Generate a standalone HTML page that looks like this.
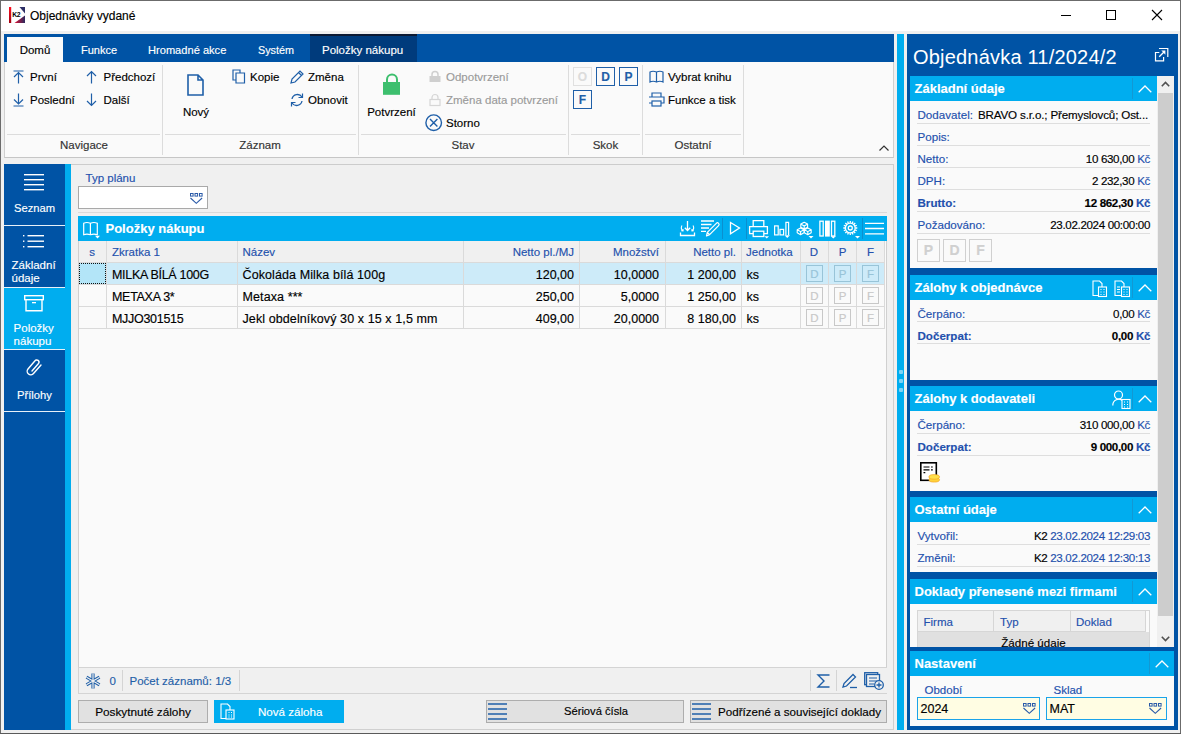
<!DOCTYPE html><html><head><meta charset="utf-8"><style>
html,body{margin:0;padding:0;}
body{width:1181px;height:734px;position:relative;overflow:hidden;background:#f0f0f0;font-family:"Liberation Sans", sans-serif;}
svg{overflow:visible}
div{-webkit-text-stroke:0.15px currentColor}
</style></head><body>
<div style="position:absolute;left:0px;top:0px;width:1181px;height:734px;background:#f0f0f0"></div>
<div style="position:absolute;left:0px;top:0px;width:1181px;height:31px;background:#ffffff"></div>
<div style="position:absolute;left:0px;top:0px;width:1181px;height:1px;background:#6b6b6b"></div>
<div style="position:absolute;left:0px;top:0px;width:1px;height:734px;background:#6b6b6b"></div>
<div style="position:absolute;left:1180px;top:0px;width:1px;height:734px;background:#6b6b6b"></div>
<div style="position:absolute;left:0px;top:733px;width:1181px;height:1px;background:#5a5a5a"></div>
<svg style="position:absolute;left:9px;top:7px;" width="16" height="16" viewBox="0 0 16 16"><defs><linearGradient id="k2r" x1="0" y1="0" x2="0" y2="1"><stop offset="0" stop-color="#ff1020"/><stop offset="1" stop-color="#a00010"/></linearGradient><linearGradient id="k2b" x1="0" y1="0" x2="1" y2="0"><stop offset="0" stop-color="#e01030"/><stop offset="1" stop-color="#2a2a60"/></linearGradient></defs><rect x="0" y="0" width="16" height="16" fill="#fff"/><rect x="0" y="0" width="2.2" height="16" fill="url(#k2r)"/><path d="M10.5 0 H16 V6.5 Z" fill="#2d2f66"/><path d="M5.5 16 H16 V8.5 Z" fill="url(#k2b)"/><text x="3.2" y="10.3" font-size="6.8" font-weight="700" fill="#000" font-family="Liberation Sans" letter-spacing="-0.3">K2</text></svg>
<div style="position:absolute;left:30px;top:8.5px;line-height:14px;font-size:12px;color:#000;font-weight:400;white-space:nowrap;">Objednávky vydané</div>
<div style="position:absolute;left:1061px;top:15px;width:10px;height:1px;background:#000"></div>
<div style="position:absolute;left:1106px;top:10px;width:10px;height:10px;border:1px solid #000;box-sizing:border-box"></div>
<svg style="position:absolute;left:1152px;top:10px;" width="10" height="10" viewBox="0 0 10 10"><path d="M0 0 L10 10 M10 0 L0 10" stroke="#000" stroke-width="1.1"/></svg>
<div style="position:absolute;left:4px;top:34px;width:890px;height:28px;background:#0053a5"></div>
<div style="position:absolute;left:7px;top:37px;width:56px;height:25px;background:#fafafa"></div>
<div style="position:absolute;left:7.0px;width:56px;text-align:center;top:42.5px;line-height:14px;font-size:11.5px;color:#000;font-weight:400;white-space:nowrap;">Domů</div>
<div style="position:absolute;left:81px;top:43.8px;line-height:13px;font-size:11px;color:#fff;font-weight:400;white-space:nowrap;">Funkce</div>
<div style="position:absolute;left:148px;top:43.8px;line-height:13px;font-size:11.1px;color:#fff;font-weight:400;white-space:nowrap;">Hromadné akce</div>
<div style="position:absolute;left:258px;top:43.8px;line-height:13px;font-size:10.8px;color:#fff;font-weight:400;white-space:nowrap;">Systém</div>
<div style="position:absolute;left:310px;top:34px;width:107px;height:28px;background:#003b7c"></div>
<div style="position:absolute;left:310px;top:34px;width:107px;height:2px;background:#0c1a33"></div>
<div style="position:absolute;left:322px;top:42.5px;line-height:14px;font-size:11.5px;color:#fff;font-weight:400;white-space:nowrap;">Položky nákupu</div>
<div style="position:absolute;left:4px;top:62px;width:890px;height:96px;background:#fafafa;border:1px solid #d0d0d0;border-bottom-color:#c6c6c6;border-top:none;box-sizing:border-box"></div>
<div style="position:absolute;left:162px;top:65px;width:1px;height:90px;background:#dcdcdc"></div>
<div style="position:absolute;left:358px;top:65px;width:1px;height:90px;background:#dcdcdc"></div>
<div style="position:absolute;left:568px;top:65px;width:1px;height:90px;background:#dcdcdc"></div>
<div style="position:absolute;left:642px;top:65px;width:1px;height:90px;background:#dcdcdc"></div>
<div style="position:absolute;left:743px;top:65px;width:1px;height:90px;background:#dcdcdc"></div>
<div style="position:absolute;left:7px;top:134px;width:153px;height:1px;background:#dcdcdc"></div>
<div style="position:absolute;left:165px;top:134px;width:191px;height:1px;background:#dcdcdc"></div>
<div style="position:absolute;left:361px;top:134px;width:205px;height:1px;background:#dcdcdc"></div>
<div style="position:absolute;left:571px;top:134px;width:69px;height:1px;background:#dcdcdc"></div>
<div style="position:absolute;left:645px;top:134px;width:96px;height:1px;background:#dcdcdc"></div>
<div style="position:absolute;left:34.0px;width:100px;text-align:center;top:137.5px;line-height:14px;font-size:11.5px;color:#333;font-weight:400;white-space:nowrap;">Navigace</div>
<div style="position:absolute;left:210.0px;width:100px;text-align:center;top:137.5px;line-height:14px;font-size:11.5px;color:#333;font-weight:400;white-space:nowrap;">Záznam</div>
<div style="position:absolute;left:413.0px;width:100px;text-align:center;top:137.5px;line-height:14px;font-size:11.5px;color:#333;font-weight:400;white-space:nowrap;">Stav</div>
<div style="position:absolute;left:575.5px;width:60px;text-align:center;top:137.5px;line-height:14px;font-size:11.5px;color:#333;font-weight:400;white-space:nowrap;">Skok</div>
<div style="position:absolute;left:653.0px;width:80px;text-align:center;top:137.5px;line-height:14px;font-size:11.5px;color:#333;font-weight:400;white-space:nowrap;">Ostatní</div>
<svg style="position:absolute;left:13px;top:70px;" width="11" height="14" viewBox="0 0 11 14"><path d="M0.5 1 H10.5 M5.5 2.5 V13.5 M1 7 L5.5 2.5 L10 7" stroke="#1f5fa8" stroke-width="1.2" fill="none"/></svg>
<div style="position:absolute;left:30px;top:70.0px;line-height:14px;font-size:11.5px;color:#000;font-weight:400;white-space:nowrap;">První</div>
<svg style="position:absolute;left:13px;top:93px;" width="11" height="14" viewBox="0 0 11 14"><path d="M0.5 13 H10.5 M5.5 0.5 V11 M1 6.5 L5.5 11 L10 6.5" stroke="#1f5fa8" stroke-width="1.2" fill="none"/></svg>
<div style="position:absolute;left:30px;top:93.0px;line-height:14px;font-size:11.5px;color:#000;font-weight:400;white-space:nowrap;">Poslední</div>
<svg style="position:absolute;left:86px;top:70px;" width="11" height="14" viewBox="0 0 11 14"><path d="M5.5 1.5 V13.5 M1 6 L5.5 1.5 L10 6" stroke="#1f5fa8" stroke-width="1.2" fill="none"/></svg>
<div style="position:absolute;left:103.5px;top:70.0px;line-height:14px;font-size:11.5px;color:#000;font-weight:400;white-space:nowrap;">Předchozí</div>
<svg style="position:absolute;left:86px;top:93px;" width="11" height="14" viewBox="0 0 11 14"><path d="M5.5 0.5 V12.5 M1 8 L5.5 12.5 L10 8" stroke="#1f5fa8" stroke-width="1.2" fill="none"/></svg>
<div style="position:absolute;left:103.5px;top:93.0px;line-height:14px;font-size:11.5px;color:#000;font-weight:400;white-space:nowrap;">Další</div>
<svg style="position:absolute;left:187px;top:74px;" width="17" height="22" viewBox="0 0 17 22"><path d="M1 1 H11 L16 6 V21 H1 Z M11 1 V6 H16" stroke="#1f5fa8" stroke-width="1.6" fill="none" stroke-linejoin="miter"/></svg>
<div style="position:absolute;left:176.0px;width:40px;text-align:center;top:105.0px;line-height:14px;font-size:11.5px;color:#000;font-weight:400;white-space:nowrap;">Nový</div>
<svg style="position:absolute;left:232px;top:69px;" width="14" height="15" viewBox="0 0 14 15"><path d="M1 1 H8 V11 H1 Z" stroke="#1f5fa8" stroke-width="1.2" fill="none"/><path d="M4 4 H12.5 V14 H4 Z" stroke="#1f5fa8" stroke-width="1.2" fill="#fafafa"/></svg>
<div style="position:absolute;left:250px;top:70.0px;line-height:14px;font-size:11.5px;color:#000;font-weight:400;white-space:nowrap;">Kopie</div>
<svg style="position:absolute;left:290px;top:70px;" width="14" height="14" viewBox="0 0 14 14"><path d="M1 13 L2 9 L10 1 L13 4 L5 12 Z M8.5 2.5 L11.5 5.5" stroke="#1f5fa8" stroke-width="1.2" fill="none"/></svg>
<div style="position:absolute;left:308px;top:70.0px;line-height:14px;font-size:11.5px;color:#000;font-weight:400;white-space:nowrap;">Změna</div>
<svg style="position:absolute;left:290px;top:93px;" width="14" height="14" viewBox="0 0 14 14"><path d="M2 6 A5.5 5.5 0 0 1 12 4 M12 8 A5.5 5.5 0 0 1 2 10" stroke="#1f5fa8" stroke-width="1.3" fill="none"/><path d="M12.5 0.5 V4.5 H8.5 M1.5 13.5 V9.5 H5.5" stroke="#1f5fa8" stroke-width="1.2" fill="none"/></svg>
<div style="position:absolute;left:308px;top:93.0px;line-height:14px;font-size:11.5px;color:#000;font-weight:400;white-space:nowrap;">Obnovit</div>
<svg style="position:absolute;left:383px;top:74px;" width="18" height="21" viewBox="0 0 18 21"><path d="M4 8 V5.5 A5 5 0 0 1 14 5.5 V8" stroke="#3dbf6e" stroke-width="2" fill="none"/><rect x="0" y="8" width="17" height="12.8" fill="#3dbf6e"/></svg>
<div style="position:absolute;left:356.5px;width:70px;text-align:center;top:105.0px;line-height:14px;font-size:11.5px;color:#000;font-weight:400;white-space:nowrap;">Potvrzení</div>
<svg style="position:absolute;left:429px;top:71px;" width="12" height="11" viewBox="0 0 12 11"><path d="M3 5 V3.5 A3 3 0 0 1 9 3.5 V5" stroke="#cfcfcf" stroke-width="1.5" fill="none"/><rect x="0.5" y="5" width="11" height="6" fill="#cfcfcf"/></svg>
<div style="position:absolute;left:446px;top:70.0px;line-height:14px;font-size:11.5px;color:#9a9a9a;font-weight:400;white-space:nowrap;">Odpotvrzení</div>
<svg style="position:absolute;left:429px;top:93.5px;" width="12" height="12" viewBox="0 0 12 12"><path d="M3 5.5 V3.5 A3 3 0 0 1 9 3.5 V5.5" stroke="#d6d6d6" stroke-width="1.2" fill="none"/><rect x="1" y="5.5" width="10" height="6" stroke="#d6d6d6" stroke-width="1.2" fill="none"/></svg>
<div style="position:absolute;left:446px;top:93.0px;line-height:14px;font-size:11.5px;color:#9a9a9a;font-weight:400;white-space:nowrap;">Změna data potvrzení</div>
<svg style="position:absolute;left:425px;top:114px;" width="18" height="18" viewBox="0 0 18 18"><circle cx="8.7" cy="8.7" r="7.8" stroke="#1f5fa8" stroke-width="1.4" fill="none"/><path d="M5 5 L12.4 12.4 M12.4 5 L5 12.4" stroke="#1f5fa8" stroke-width="1.4"/></svg>
<div style="position:absolute;left:446px;top:116.0px;line-height:14px;font-size:11.5px;color:#000;font-weight:400;white-space:nowrap;">Storno</div>
<div style="position:absolute;left:573px;top:67px;width:19px;height:19px;border:1px solid #e0e0e0;box-sizing:border-box"></div>
<div style="position:absolute;left:573.0px;width:19px;text-align:center;top:70.0px;line-height:14px;font-size:12px;color:#dcdcdc;font-weight:700;white-space:nowrap;">O</div>
<div style="position:absolute;left:596px;top:67px;width:19px;height:19px;border:1.5px solid #1f5fa8;box-sizing:border-box"></div>
<div style="position:absolute;left:596.0px;width:19px;text-align:center;top:70.0px;line-height:14px;font-size:12px;color:#1f5fa8;font-weight:700;white-space:nowrap;">D</div>
<div style="position:absolute;left:619px;top:67px;width:19px;height:19px;border:1.5px solid #1f5fa8;box-sizing:border-box"></div>
<div style="position:absolute;left:619.0px;width:19px;text-align:center;top:70.0px;line-height:14px;font-size:12px;color:#1f5fa8;font-weight:700;white-space:nowrap;">P</div>
<div style="position:absolute;left:573px;top:90px;width:19px;height:19px;border:1.5px solid #1f5fa8;box-sizing:border-box"></div>
<div style="position:absolute;left:573.0px;width:19px;text-align:center;top:93.0px;line-height:14px;font-size:12px;color:#1f5fa8;font-weight:700;white-space:nowrap;">F</div>
<svg style="position:absolute;left:649px;top:70px;" width="15" height="13" viewBox="0 0 15 13"><path d="M1 2 Q4 0.5 7.5 2 Q11 0.5 14 2 V12 Q11 10.5 7.5 12 Q4 10.5 1 12 Z M7.5 2 V12" stroke="#1f5fa8" stroke-width="1.2" fill="none"/></svg>
<div style="position:absolute;left:668px;top:70.0px;line-height:14px;font-size:11.5px;color:#000;font-weight:400;white-space:nowrap;">Vybrat knihu</div>
<svg style="position:absolute;left:648px;top:92px;" width="17" height="15" viewBox="0 0 17 15"><path d="M4 5 V1 H13 V5 M1 5 H16 V11 H13 M4 11 H1 Z" stroke="#1f5fa8" stroke-width="1.2" fill="none"/><rect x="4" y="9" width="9" height="5" stroke="#1f5fa8" stroke-width="1.2" fill="#fafafa"/></svg>
<div style="position:absolute;left:668px;top:92.5px;line-height:14px;font-size:11.5px;color:#000;font-weight:400;white-space:nowrap;">Funkce a tisk</div>
<svg style="position:absolute;left:879px;top:145px;" width="10" height="6" viewBox="0 0 10 6"><path d="M0.5 5.5 L5 1 L9.5 5.5" stroke="#333" stroke-width="1.2" fill="none"/></svg>
<div style="position:absolute;left:4px;top:164px;width:61px;height:566px;background:#0053a5"></div>
<div style="position:absolute;left:65px;top:164px;width:6px;height:566px;background:#00adef"></div>
<div style="position:absolute;left:4px;top:288px;width:61px;height:61px;background:#00adef"></div>
<div style="position:absolute;left:4px;top:225px;width:61px;height:1px;background:#e8f0f8"></div>
<div style="position:absolute;left:4px;top:287px;width:61px;height:1px;background:#e8f0f8"></div>
<div style="position:absolute;left:4px;top:349px;width:61px;height:1px;background:#e8f0f8"></div>
<div style="position:absolute;left:4px;top:411px;width:61px;height:1px;background:#e8f0f8"></div>
<svg style="position:absolute;left:24px;top:174px;" width="20" height="16" viewBox="0 0 20 16"><rect x="0" y="0" width="20" height="1.4" fill="#fff"/><rect x="0" y="5" width="20" height="1.4" fill="#fff"/><rect x="0" y="10" width="20" height="1.4" fill="#fff"/><rect x="0" y="15" width="20" height="1.4" fill="#fff"/></svg>
<div style="position:absolute;left:4.5px;width:60px;text-align:center;top:202.0px;line-height:13px;font-size:11.2px;color:#fff;font-weight:400;white-space:nowrap;">Seznam</div>
<svg style="position:absolute;left:23px;top:235px;" width="22" height="13" viewBox="0 0 22 13"><rect x="0" y="0" width="1.4" height="1.4" fill="#fff"/><rect x="4.5" y="0" width="16.5" height="1.4" fill="#fff"/><rect x="0" y="5.5" width="1.4" height="1.4" fill="#fff"/><rect x="4.5" y="5.5" width="16.5" height="1.4" fill="#fff"/><rect x="0" y="11" width="1.4" height="1.4" fill="#fff"/><rect x="4.5" y="11" width="16.5" height="1.4" fill="#fff"/></svg>
<div style="position:absolute;left:11.5px;top:258.0px;line-height:14px;font-size:11.5px;color:#fff;font-weight:400;white-space:nowrap;">Základní</div>
<div style="position:absolute;left:11.5px;top:271.0px;line-height:14px;font-size:11.5px;color:#fff;font-weight:400;white-space:nowrap;">údaje</div>
<svg style="position:absolute;left:24px;top:295px;" width="20" height="17" viewBox="0 0 20 17"><rect x="0.7" y="0.7" width="18.6" height="4" stroke="#fff" stroke-width="1.4" fill="none"/><path d="M2 4.7 V15.7 H18 V4.7" stroke="#fff" stroke-width="1.4" fill="none"/><rect x="8" y="7" width="4" height="1.3" fill="#fff"/></svg>
<div style="position:absolute;left:13.6px;top:320.5px;line-height:14px;font-size:11.5px;color:#fff;font-weight:400;white-space:nowrap;">Položky</div>
<div style="position:absolute;left:13.6px;top:333.5px;line-height:14px;font-size:11.5px;color:#fff;font-weight:400;white-space:nowrap;">nákupu</div>
<svg style="position:absolute;left:26px;top:359px;" width="17" height="19" viewBox="0 0 17 19"><path d="M6 12 L12.5 4.5 A2.2 2.2 0 0 0 9 1.8 L2 10 A3.5 3.5 0 0 0 7.5 14.5 L15 6" stroke="#fff" stroke-width="1.4" fill="none" stroke-linecap="round"/></svg>
<div style="position:absolute;left:4.5px;width:60px;text-align:center;top:389.0px;line-height:13px;font-size:11.2px;color:#fff;font-weight:400;white-space:nowrap;">Přílohy</div>
<div style="position:absolute;left:71px;top:164px;width:823px;height:566px;background:#f0f0f0;border-right:1px solid #cfcfcf;border-top:1px solid #cccccc;border-bottom:1px solid #d0d0d0;box-sizing:border-box"></div>
<div style="position:absolute;left:85.5px;top:171.0px;line-height:14px;font-size:11.5px;color:#2350ad;font-weight:400;white-space:nowrap;">Typ plánu</div>
<div style="position:absolute;left:78px;top:186px;width:130px;height:23px;background:#fff;border:1px solid #a9a9a9;box-sizing:border-box"></div>
<svg style="position:absolute;left:190px;top:193px;" width="13" height="11" viewBox="0 0 13 11"><rect x="0.5" y="0.5" width="2.6" height="2.6" stroke="#2a5aa8" stroke-width="1" fill="none"/><rect x="5" y="0.5" width="2.6" height="2.6" stroke="#2a5aa8" stroke-width="1" fill="none"/><rect x="9.5" y="0.5" width="2.6" height="2.6" stroke="#2a5aa8" stroke-width="1" fill="none"/><path d="M0.5 5 L6.3 10.3 L12.1 5" stroke="#2a5aa8" stroke-width="1.1" fill="none"/></svg>
<div style="position:absolute;left:78px;top:212px;width:809px;height:1px;background:#dadada"></div>
<div style="position:absolute;left:78px;top:216px;width:809px;height:25px;background:#00adef"></div>
<svg style="position:absolute;left:82px;top:221px;" width="20" height="19" viewBox="0 0 20 19"><path d="M1.7 2.2 Q4.8 0.8 8.4 2.2 Q12 0.8 15.3 2.2 V13.7 Q12 12.5 8.4 13.7 Q4.8 12.5 1.7 13.7 Z M8.4 2.2 V13.7" stroke="#fff" stroke-width="1.2" fill="none"/><path d="M13 14.8 H18 L15.5 17.5 Z" fill="#fff"/></svg>
<div style="position:absolute;left:105.5px;top:221.0px;line-height:16px;font-size:13px;color:#fff;font-weight:700;white-space:nowrap;">Položky nákupu</div>
<svg style="position:absolute;left:679px;top:220px;" width="17" height="17" viewBox="0 0 17 17"><path d="M1.5 12.5 V15.5 H15.5 V12.5" stroke="#fff" stroke-width="1.3" fill="none"/><path d="M8.5 1 V10.5 M5.8 7.8 L8.5 10.5 L11.2 7.8" stroke="#fff" stroke-width="1.3" fill="none"/><path d="M3 5.5 Q1.2 8.5 4 11 M2.3 10.8 L4 11 L4.2 9.2 M14 5.5 Q15.8 8.5 13 11 M14.7 10.8 L13 11 L12.8 9.2" stroke="#fff" stroke-width="1.1" fill="none"/></svg>
<svg style="position:absolute;left:700px;top:220px;" width="21" height="17" viewBox="0 0 21 17"><path d="M1 1 H14 M1 4.5 H11.5 M1 8 H9 M1 11.3 H6" stroke="#fff" stroke-width="1.3"/><path d="M6.5 16 L7.3 12.3 L16.3 3.3 A1.5 1.5 0 0 1 18.6 5.6 L9.6 14.6 Z M7.3 12.3 L9.6 14.6" stroke="#fff" stroke-width="1.2" fill="none" stroke-linejoin="round"/></svg>
<div style="position:absolute;left:722px;top:218px;width:1px;height:21px;background:#0b8fcf"></div>
<svg style="position:absolute;left:729px;top:221px;" width="12" height="14" viewBox="0 0 12 14"><path d="M1.5 1.5 L10.5 7 L1.5 12.8 Z" stroke="#fff" stroke-width="1.3" fill="none" stroke-linejoin="miter"/></svg>
<div style="position:absolute;left:746px;top:218px;width:1px;height:21px;background:#0b8fcf"></div>
<svg style="position:absolute;left:748px;top:219px;" width="22" height="20" viewBox="0 0 22 20"><path d="M5.2 7.3 V1.7 H15.8 V7.3" stroke="#fff" stroke-width="1.3" fill="none"/><path d="M5 14.7 H1.6 V7.6 H19.4 V14.7 H16" stroke="#fff" stroke-width="1.3" fill="none"/><rect x="5.2" y="12.2" width="10.6" height="5.3" stroke="#fff" stroke-width="1.3" fill="none"/><path d="M16.5 17.3 H21 L18.75 19.6 Z" fill="#fff"/></svg>
<svg style="position:absolute;left:773px;top:220px;" width="18" height="19" viewBox="0 0 18 19"><rect x="1.6" y="5.9" width="3.6" height="9" stroke="#fff" stroke-width="1.2" fill="none"/><rect x="7" y="9.4" width="3.6" height="5.5" stroke="#fff" stroke-width="1.2" fill="none"/><path d="M12.9 15 V2.4 H15.6 V15" stroke="#fff" stroke-width="1.2" fill="none"/><path d="M11.5 15.3 H17 L14.25 18 Z" fill="#fff"/></svg>
<svg style="position:absolute;left:796px;top:221px;" width="19" height="18" viewBox="0 0 19 18"><path d="M8.2 1.1999999999999997 L11.6 3.07 V6.13 L8.2 8.0 L4.799999999999999 6.13 V3.07 Z M4.799999999999999 3.07 L8.2 4.9399999999999995 L11.6 3.07 M8.2 4.9399999999999995 V8.0 M4.6 6.9 L8.0 8.77 V11.830000000000002 L4.6 13.700000000000001 L1.1999999999999997 11.830000000000002 V8.77 Z M1.1999999999999997 8.77 L4.6 10.64 L8.0 8.77 M4.6 10.64 V13.700000000000001 M11.8 6.9 L15.200000000000001 8.77 V11.830000000000002 L11.8 13.700000000000001 L8.4 11.830000000000002 V8.77 Z M8.4 8.77 L11.8 10.64 L15.200000000000001 8.77 M11.8 10.64 V13.700000000000001" stroke="#fff" stroke-width="1.1" fill="none" stroke-linejoin="round"/><path d="M12.5 15 H17.5 L15 17.5 Z" fill="#fff"/></svg>
<svg style="position:absolute;left:819px;top:220px;" width="19" height="19" viewBox="0 0 19 19"><rect x="0.9" y="1.2" width="3.3" height="14.8" stroke="#fff" stroke-width="1.3" fill="none"/><rect x="6" y="0.6" width="4.8" height="16" fill="#fff"/><rect x="12.5" y="1.2" width="3.3" height="14.8" stroke="#fff" stroke-width="1.3" fill="none"/><path d="M11.8 16.2 H16.8 L14.3 18.6 Z" fill="#fff"/></svg>
<svg style="position:absolute;left:843px;top:220px;" width="19" height="19" viewBox="0 0 19 19"><circle cx="7.3" cy="8" r="4.9" stroke="#fff" stroke-width="1.3" fill="none"/><path d="M12.50 8.00 L14.30 8.00 M12.10 9.99 L13.77 10.68 M10.98 11.68 L12.25 12.95 M9.29 12.80 L9.98 14.47 M7.30 13.20 L7.30 15.00 M5.31 12.80 L4.62 14.47 M3.62 11.68 L2.35 12.95 M2.50 9.99 L0.83 10.68 M2.10 8.00 L0.30 8.00 M2.50 6.01 L0.83 5.32 M3.62 4.32 L2.35 3.05 M5.31 3.20 L4.62 1.53 M7.30 2.80 L7.30 1.00 M9.29 3.20 L9.98 1.53 M10.98 4.32 L12.25 3.05 M12.10 6.01 L13.77 5.32" stroke="#fff" stroke-width="1.3"/><circle cx="7.3" cy="8" r="2" stroke="#fff" stroke-width="1.3" fill="none"/><path d="M12 16 H17 L14.5 18.5 Z" fill="#fff"/></svg>
<div style="position:absolute;left:862px;top:218px;width:1px;height:21px;background:#0b8fcf"></div>
<svg style="position:absolute;left:865px;top:220px;" width="20" height="16" viewBox="0 0 20 16"><path d="M0 3.3 H19 M0 8.5 H19 M0 13.8 H19" stroke="#fff" stroke-width="1.3"/></svg>
<div style="position:absolute;left:78px;top:241px;width:809px;height:426px;background:#fafafa;border-left:1px solid #d0d0d0;border-right:1px solid #d0d0d0;box-sizing:border-box"></div>
<div style="position:absolute;left:79px;top:241px;width:806px;height:21px;background:#f0f0f0"></div>
<div style="position:absolute;left:79px;top:262px;width:806px;height:22px;background:#cdebf9"></div>
<div style="position:absolute;left:79px;top:262px;width:806px;height:1px;background:#dadada"></div>
<div style="position:absolute;left:79px;top:284px;width:806px;height:1px;background:#dadada"></div>
<div style="position:absolute;left:79px;top:306px;width:806px;height:1px;background:#dadada"></div>
<div style="position:absolute;left:79px;top:328px;width:806px;height:1px;background:#dadada"></div>
<div style="position:absolute;left:106.0px;top:241px;width:1px;height:87px;background:#dadada"></div>
<div style="position:absolute;left:236.5px;top:241px;width:1px;height:87px;background:#dadada"></div>
<div style="position:absolute;left:463.0px;top:241px;width:1px;height:87px;background:#dadada"></div>
<div style="position:absolute;left:579.0px;top:241px;width:1px;height:87px;background:#dadada"></div>
<div style="position:absolute;left:664.5px;top:241px;width:1px;height:87px;background:#dadada"></div>
<div style="position:absolute;left:741.0px;top:241px;width:1px;height:87px;background:#dadada"></div>
<div style="position:absolute;left:800.0px;top:241px;width:1px;height:87px;background:#dadada"></div>
<div style="position:absolute;left:828.0px;top:241px;width:1px;height:87px;background:#dadada"></div>
<div style="position:absolute;left:856.0px;top:241px;width:1px;height:87px;background:#dadada"></div>
<div style="position:absolute;left:884.0px;top:241px;width:1px;height:87px;background:#dadada"></div>
<div style="position:absolute;left:79px;top:263px;width:27px;height:21px;border:1px dotted #111;background:#b3e5f8;box-sizing:border-box"></div>
<div style="position:absolute;left:82.0px;width:20px;text-align:center;top:245.0px;line-height:14px;font-size:11.5px;color:#2350ad;font-weight:400;white-space:nowrap;">s</div>
<div style="position:absolute;left:112px;top:245.0px;line-height:14px;font-size:11.5px;color:#2350ad;font-weight:400;white-space:nowrap;">Zkratka 1</div>
<div style="position:absolute;left:242.5px;top:245.0px;line-height:14px;font-size:11.5px;color:#2350ad;font-weight:400;white-space:nowrap;">Název</div>
<div style="position:absolute;right:607px;top:245.0px;line-height:14px;font-size:11.5px;color:#2350ad;font-weight:400;white-space:nowrap;">Netto pl./MJ</div>
<div style="position:absolute;right:522px;top:245.0px;line-height:14px;font-size:11.5px;color:#2350ad;font-weight:400;white-space:nowrap;">Množství</div>
<div style="position:absolute;right:445px;top:245.0px;line-height:14px;font-size:11.5px;color:#2350ad;font-weight:400;white-space:nowrap;">Netto pl.</div>
<div style="position:absolute;left:746px;top:245.0px;line-height:14px;font-size:11.5px;color:#2350ad;font-weight:400;white-space:nowrap;">Jednotka</div>
<div style="position:absolute;left:804.0px;width:20px;text-align:center;top:245.0px;line-height:14px;font-size:11.5px;color:#2350ad;font-weight:400;white-space:nowrap;">D</div>
<div style="position:absolute;left:832.5px;width:20px;text-align:center;top:245.0px;line-height:14px;font-size:11.5px;color:#2350ad;font-weight:400;white-space:nowrap;">P</div>
<div style="position:absolute;left:860.5px;width:20px;text-align:center;top:245.0px;line-height:14px;font-size:11.5px;color:#2350ad;font-weight:400;white-space:nowrap;">F</div>
<div style="position:absolute;left:112px;top:267.5px;line-height:15px;font-size:12.5px;color:#000;font-weight:400;white-space:nowrap;letter-spacing:-0.3px">MILKA BÍLÁ 100G</div>
<div style="position:absolute;left:242.5px;top:267.5px;line-height:15px;font-size:12.5px;color:#000;font-weight:400;white-space:nowrap;letter-spacing:0.1px">Čokoláda Milka bílá 100g</div>
<div style="position:absolute;right:607px;top:267.5px;line-height:15px;font-size:12.5px;color:#000;font-weight:400;white-space:nowrap;">120,00</div>
<div style="position:absolute;right:522px;top:267.5px;line-height:15px;font-size:12.5px;color:#000;font-weight:400;white-space:nowrap;">10,0000</div>
<div style="position:absolute;right:445px;top:267.5px;line-height:15px;font-size:12.5px;color:#000;font-weight:400;white-space:nowrap;">1 200,00</div>
<div style="position:absolute;left:746.5px;top:267.5px;line-height:15px;font-size:12.5px;color:#000;font-weight:400;white-space:nowrap;">ks</div>
<div style="position:absolute;left:806px;top:265px;width:17px;height:17px;border:1px solid #98c4d8;box-sizing:border-box"></div>
<div style="position:absolute;left:806.0px;width:17px;text-align:center;top:267.3px;line-height:14px;font-size:11.5px;color:#98c4d8;font-weight:400;white-space:nowrap;">D</div>
<div style="position:absolute;left:834px;top:265px;width:17px;height:17px;border:1px solid #98c4d8;box-sizing:border-box"></div>
<div style="position:absolute;left:834.0px;width:17px;text-align:center;top:267.3px;line-height:14px;font-size:11.5px;color:#98c4d8;font-weight:400;white-space:nowrap;">P</div>
<div style="position:absolute;left:862px;top:265px;width:17px;height:17px;border:1px solid #98c4d8;box-sizing:border-box"></div>
<div style="position:absolute;left:862.0px;width:17px;text-align:center;top:267.3px;line-height:14px;font-size:11.5px;color:#98c4d8;font-weight:400;white-space:nowrap;">F</div>
<div style="position:absolute;left:112px;top:289.5px;line-height:15px;font-size:12.5px;color:#000;font-weight:400;white-space:nowrap;letter-spacing:-0.3px">METAXA 3*</div>
<div style="position:absolute;left:242.5px;top:289.5px;line-height:15px;font-size:12.5px;color:#000;font-weight:400;white-space:nowrap;letter-spacing:0.1px">Metaxa ***</div>
<div style="position:absolute;right:607px;top:289.5px;line-height:15px;font-size:12.5px;color:#000;font-weight:400;white-space:nowrap;">250,00</div>
<div style="position:absolute;right:522px;top:289.5px;line-height:15px;font-size:12.5px;color:#000;font-weight:400;white-space:nowrap;">5,0000</div>
<div style="position:absolute;right:445px;top:289.5px;line-height:15px;font-size:12.5px;color:#000;font-weight:400;white-space:nowrap;">1 250,00</div>
<div style="position:absolute;left:746.5px;top:289.5px;line-height:15px;font-size:12.5px;color:#000;font-weight:400;white-space:nowrap;">ks</div>
<div style="position:absolute;left:806px;top:287px;width:17px;height:17px;border:1px solid #c8c8c8;box-sizing:border-box"></div>
<div style="position:absolute;left:806.0px;width:17px;text-align:center;top:289.3px;line-height:14px;font-size:11.5px;color:#c8c8c8;font-weight:400;white-space:nowrap;">D</div>
<div style="position:absolute;left:834px;top:287px;width:17px;height:17px;border:1px solid #c8c8c8;box-sizing:border-box"></div>
<div style="position:absolute;left:834.0px;width:17px;text-align:center;top:289.3px;line-height:14px;font-size:11.5px;color:#c8c8c8;font-weight:400;white-space:nowrap;">P</div>
<div style="position:absolute;left:862px;top:287px;width:17px;height:17px;border:1px solid #c8c8c8;box-sizing:border-box"></div>
<div style="position:absolute;left:862.0px;width:17px;text-align:center;top:289.3px;line-height:14px;font-size:11.5px;color:#c8c8c8;font-weight:400;white-space:nowrap;">F</div>
<div style="position:absolute;left:112px;top:311.5px;line-height:15px;font-size:12.5px;color:#000;font-weight:400;white-space:nowrap;letter-spacing:-0.3px">MJJO301515</div>
<div style="position:absolute;left:242.5px;top:311.5px;line-height:15px;font-size:12.5px;color:#000;font-weight:400;white-space:nowrap;letter-spacing:0.1px">Jekl obdelníkový 30 x 15 x 1,5 mm</div>
<div style="position:absolute;right:607px;top:311.5px;line-height:15px;font-size:12.5px;color:#000;font-weight:400;white-space:nowrap;">409,00</div>
<div style="position:absolute;right:522px;top:311.5px;line-height:15px;font-size:12.5px;color:#000;font-weight:400;white-space:nowrap;">20,0000</div>
<div style="position:absolute;right:445px;top:311.5px;line-height:15px;font-size:12.5px;color:#000;font-weight:400;white-space:nowrap;">8 180,00</div>
<div style="position:absolute;left:746.5px;top:311.5px;line-height:15px;font-size:12.5px;color:#000;font-weight:400;white-space:nowrap;">ks</div>
<div style="position:absolute;left:806px;top:309px;width:17px;height:17px;border:1px solid #c8c8c8;box-sizing:border-box"></div>
<div style="position:absolute;left:806.0px;width:17px;text-align:center;top:311.3px;line-height:14px;font-size:11.5px;color:#c8c8c8;font-weight:400;white-space:nowrap;">D</div>
<div style="position:absolute;left:834px;top:309px;width:17px;height:17px;border:1px solid #c8c8c8;box-sizing:border-box"></div>
<div style="position:absolute;left:834.0px;width:17px;text-align:center;top:311.3px;line-height:14px;font-size:11.5px;color:#c8c8c8;font-weight:400;white-space:nowrap;">P</div>
<div style="position:absolute;left:862px;top:309px;width:17px;height:17px;border:1px solid #c8c8c8;box-sizing:border-box"></div>
<div style="position:absolute;left:862.0px;width:17px;text-align:center;top:311.3px;line-height:14px;font-size:11.5px;color:#c8c8c8;font-weight:400;white-space:nowrap;">F</div>
<div style="position:absolute;left:78px;top:667px;width:809px;height:27px;background:#f0f0f0;border-top:1px solid #d4d4d4;border-bottom:1px solid #d4d4d4;border-left:1px solid #d4d4d4;box-sizing:border-box"></div>
<svg style="position:absolute;left:85px;top:673px;" width="16" height="16" viewBox="0 0 16 16"><path d="M8 0.5 V15.5 M1.5 4.2 L14.5 11.8 M14.5 4.2 L1.5 11.8" stroke="#1f5fa8" stroke-width="3.2" stroke-linecap="butt"/><path d="M8 0.5 V15.5 M1.5 4.2 L14.5 11.8 M14.5 4.2 L1.5 11.8" stroke="#f0f0f0" stroke-width="1.2"/></svg>
<div style="position:absolute;left:109.5px;top:674.0px;line-height:14px;font-size:11.5px;color:#1f5fa8;font-weight:400;white-space:nowrap;">0</div>
<div style="position:absolute;left:122px;top:670px;width:1px;height:21px;background:#d4d4d4"></div>
<div style="position:absolute;left:129.5px;top:674.0px;line-height:14px;font-size:11.5px;color:#1f5fa8;font-weight:400;white-space:nowrap;">Počet záznamů: 1/3</div>
<div style="position:absolute;left:239px;top:670px;width:1px;height:21px;background:#d4d4d4"></div>
<div style="position:absolute;left:810px;top:670px;width:1px;height:21px;background:#d4d4d4"></div>
<div style="position:absolute;left:836px;top:670px;width:1px;height:21px;background:#d4d4d4"></div>
<svg style="position:absolute;left:817px;top:674px;" width="13" height="14" viewBox="0 0 13 14"><path d="M12.5 1 H1 L7 7 L1 13 H12.5" stroke="#1f5fa8" stroke-width="1.4" fill="none"/></svg>
<svg style="position:absolute;left:842px;top:673px;" width="16" height="16" viewBox="0 0 16 16"><path d="M1 14 L2 10.5 L11 1.5 L13.5 4 L4.5 13 Z" stroke="#1f5fa8" stroke-width="1.3" fill="none"/><path d="M8 14.5 H15" stroke="#1f5fa8" stroke-width="1.3"/></svg>
<svg style="position:absolute;left:864px;top:672px;" width="20" height="18" viewBox="0 0 20 18"><rect x="0.7" y="0.7" width="13" height="12" stroke="#1f5fa8" stroke-width="1.3" fill="none"/><rect x="2.5" y="2.5" width="13" height="12" stroke="#1f5fa8" stroke-width="1.3" fill="#f0f0f0"/><path d="M5 6 H13 M5 9 H13 M5 12 H10" stroke="#1f5fa8" stroke-width="1.1"/><circle cx="15" cy="13" r="4.3" stroke="#1f5fa8" stroke-width="1.3" fill="#f0f0f0"/><path d="M15 10.5 V15.5 M12.5 13 H17.5" stroke="#1f5fa8" stroke-width="1.3"/></svg>
<div style="position:absolute;left:78px;top:700px;width:130px;height:23px;background:#e1e1e1;border:1px solid #adadad;box-sizing:border-box"></div>
<div style="position:absolute;left:78.0px;width:130px;text-align:center;top:704.5px;line-height:14px;font-size:11.8px;color:#000;font-weight:400;white-space:nowrap;">Poskytnuté zálohy</div>
<div style="position:absolute;left:214px;top:700px;width:130px;height:23px;background:#00adef"></div>
<svg style="position:absolute;left:220px;top:703px;" width="16" height="17" viewBox="0 0 16 17"><path d="M1 1 H7.5 L10 3.5 V15.5 H1 Z" stroke="#fff" stroke-width="1.1" fill="none"/><rect x="6" y="7" width="8" height="9" stroke="#fff" stroke-width="1.1" fill="#00adef"/><path d="M8.5 9.5 h1 M11 9.5 h1 M8.5 12 h1 M11 12 h1 M8.5 14 h1 M11 14 h1" stroke="#fff" stroke-width="1"/></svg>
<div style="position:absolute;left:258px;top:704.5px;line-height:14px;font-size:11.6px;color:#fff;font-weight:400;white-space:nowrap;">Nová záloha</div>
<div style="position:absolute;left:486px;top:700px;width:198px;height:23px;background:#e1e1e1;border:1px solid #adadad;box-sizing:border-box"></div>
<svg style="position:absolute;left:488px;top:702px;" width="19" height="19" viewBox="0 0 19 19"><path d="M0 2 H19 M0 7 H19 M0 12 H19 M0 17 H19" stroke="#1f5fa8" stroke-width="1.3"/></svg>
<div style="position:absolute;left:536.0px;width:120px;text-align:center;top:705.0px;line-height:13px;font-size:11.2px;color:#000;font-weight:400;white-space:nowrap;">Sériová čísla</div>
<div style="position:absolute;left:690px;top:700px;width:197px;height:23px;background:#e1e1e1;border:1px solid #adadad;box-sizing:border-box"></div>
<svg style="position:absolute;left:692px;top:702px;" width="19" height="19" viewBox="0 0 19 19"><path d="M0 2 H19 M0 7 H19 M0 12 H19 M0 17 H19" stroke="#1f5fa8" stroke-width="1.3"/></svg>
<div style="position:absolute;left:718px;top:704.5px;line-height:14px;font-size:11.6px;color:#000;font-weight:400;white-space:nowrap;">Podřízené a související doklady</div>
<div style="position:absolute;left:897px;top:34px;width:7px;height:696px;background:#00adef"></div>
<div style="position:absolute;left:899px;top:370px;width:3.5px;height:3.5px;background:#7fd3f5;border-radius:1px"></div>
<div style="position:absolute;left:899px;top:379px;width:3.5px;height:3.5px;background:#7fd3f5;border-radius:1px"></div>
<div style="position:absolute;left:899px;top:388px;width:3.5px;height:3.5px;background:#7fd3f5;border-radius:1px"></div>
<div style="position:absolute;left:907px;top:34px;width:271px;height:696px;background:#0053a5"></div>
<div style="position:absolute;left:913px;top:44.0px;line-height:26px;font-size:20px;color:#fff;font-weight:400;white-space:nowrap;letter-spacing:0.2px;-webkit-text-stroke:0">Objednávka 11/2024/2</div>
<svg style="position:absolute;left:1154px;top:47px;" width="16" height="16" viewBox="0 0 16 16"><path d="M5 1.5 H13.8 V10 M5.3 5.5 H1.5 V13.8 H9.6 V10" stroke="#fff" stroke-width="1.2" fill="none"/><path d="M5.2 9.8 L10.2 4.8" stroke="#fff" stroke-width="1.3"/><path d="M7.3 3.6 H11.4 V7.7 Z" fill="#fff"/></svg>
<div style="position:absolute;left:1157px;top:76px;width:17px;height:572px;background:#f0f0f0"></div>
<div style="position:absolute;left:1158px;top:93px;width:15px;height:523px;background:#cdcdcd"></div>
<svg style="position:absolute;left:1161px;top:81px;" width="9" height="6" viewBox="0 0 9 6"><path d="M0.8 5.2 L4.5 1.5 L8.2 5.2" stroke="#505050" stroke-width="1.6" fill="none"/></svg>
<svg style="position:absolute;left:1161px;top:636px;" width="9" height="6" viewBox="0 0 9 6"><path d="M0.8 0.8 L4.5 4.5 L8.2 0.8" stroke="#505050" stroke-width="1.6" fill="none"/></svg>
<div style="position:absolute;left:910px;top:101px;width:247px;height:167px;background:#fafafa"></div>
<div style="position:absolute;left:910px;top:76px;width:247px;height:25px;background:#00adef"></div>
<div style="position:absolute;left:914.5px;top:80.5px;line-height:16px;font-size:13px;color:#fff;font-weight:700;white-space:nowrap;">Základní údaje</div>
<div style="position:absolute;left:1132px;top:78px;width:1px;height:21px;background:#1a8fc8;opacity:.7"></div>
<svg style="position:absolute;left:1138px;top:85px;" width="14" height="8" viewBox="0 0 14 8"><path d="M0.7 7.3 L7 1 L13.3 7.3" stroke="#fff" stroke-width="1.3" fill="none"/></svg>
<div style="position:absolute;left:917.5px;top:108.0px;line-height:14px;font-size:11.6px;color:#2350ad;font-weight:400;white-space:nowrap;">Dodavatel:</div>
<div style="position:absolute;left:978px;top:108.0px;line-height:14px;font-size:11.6px;color:#000;font-weight:400;white-space:nowrap;letter-spacing:-0.15px">BRAVO s.r.o.; Přemyslovců; Ost...</div>
<div style="position:absolute;left:917px;top:122.5px;width:233px;height:1px;background:#dedede"></div>
<div style="position:absolute;left:917.5px;top:130.0px;line-height:14px;font-size:11.6px;color:#2350ad;font-weight:400;white-space:nowrap;">Popis:</div>
<div style="position:absolute;right:31px;top:130.0px;line-height:14px;font-size:11.6px;color:#000;font-weight:400;white-space:nowrap;letter-spacing:-0.35px"></div>
<div style="position:absolute;left:917px;top:144.5px;width:233px;height:1px;background:#dedede"></div>
<div style="position:absolute;left:917.5px;top:152.0px;line-height:14px;font-size:11.6px;color:#2350ad;font-weight:400;white-space:nowrap;">Netto:</div>
<div style="position:absolute;right:31px;top:152.0px;line-height:14px;font-size:11.6px;color:#000;font-weight:400;white-space:nowrap;letter-spacing:-0.35px">10 630,00 <span style="color:#2350ad">Kč</span></div>
<div style="position:absolute;left:917px;top:166.5px;width:233px;height:1px;background:#dedede"></div>
<div style="position:absolute;left:917.5px;top:174.0px;line-height:14px;font-size:11.6px;color:#2350ad;font-weight:400;white-space:nowrap;">DPH:</div>
<div style="position:absolute;right:31px;top:174.0px;line-height:14px;font-size:11.6px;color:#000;font-weight:400;white-space:nowrap;letter-spacing:-0.35px">2 232,30 <span style="color:#2350ad">Kč</span></div>
<div style="position:absolute;left:917px;top:188.5px;width:233px;height:1px;background:#dedede"></div>
<div style="position:absolute;left:917.5px;top:196.0px;line-height:14px;font-size:11.6px;color:#2350ad;font-weight:700;white-space:nowrap;">Brutto:</div>
<div style="position:absolute;right:31px;top:196.0px;line-height:14px;font-size:11.6px;color:#000;font-weight:700;white-space:nowrap;letter-spacing:-0.35px">12 862,30 <span style="color:#2350ad">Kč</span></div>
<div style="position:absolute;left:917px;top:210.5px;width:233px;height:1px;background:#dedede"></div>
<div style="position:absolute;left:917.5px;top:218.0px;line-height:14px;font-size:11.6px;color:#2350ad;font-weight:400;white-space:nowrap;">Požadováno:</div>
<div style="position:absolute;right:31px;top:218.0px;line-height:14px;font-size:11.6px;color:#000;font-weight:400;white-space:nowrap;letter-spacing:-0.35px">23.02.2024 00:00:00</div>
<div style="position:absolute;left:917px;top:232.5px;width:233px;height:1px;background:#dedede"></div>
<div style="position:absolute;left:917px;top:239px;width:23px;height:23px;border:1.5px solid #d0d0d0;box-sizing:border-box"></div>
<div style="position:absolute;left:917.0px;width:23px;text-align:center;top:242.0px;line-height:17px;font-size:14px;color:#d0d0d0;font-weight:700;white-space:nowrap;">P</div>
<div style="position:absolute;left:943px;top:239px;width:23px;height:23px;border:1.5px solid #d0d0d0;box-sizing:border-box"></div>
<div style="position:absolute;left:943.0px;width:23px;text-align:center;top:242.0px;line-height:17px;font-size:14px;color:#d0d0d0;font-weight:700;white-space:nowrap;">D</div>
<div style="position:absolute;left:969px;top:239px;width:23px;height:23px;border:1.5px solid #d0d0d0;box-sizing:border-box"></div>
<div style="position:absolute;left:969.0px;width:23px;text-align:center;top:242.0px;line-height:17px;font-size:14px;color:#d0d0d0;font-weight:700;white-space:nowrap;">F</div>
<div style="position:absolute;left:910px;top:275px;width:247px;height:25px;background:#00adef"></div>
<div style="position:absolute;left:914.5px;top:279.5px;line-height:16px;font-size:13px;color:#fff;font-weight:700;white-space:nowrap;">Zálohy k objednávce</div>
<div style="position:absolute;left:1132px;top:277px;width:1px;height:21px;background:#1a8fc8;opacity:.7"></div>
<svg style="position:absolute;left:1138px;top:284px;" width="14" height="8" viewBox="0 0 14 8"><path d="M0.7 7.3 L7 1 L13.3 7.3" stroke="#fff" stroke-width="1.3" fill="none"/></svg>
<div style="position:absolute;left:910px;top:300px;width:247px;height:80px;background:#fafafa"></div>
<svg style="position:absolute;left:1092px;top:280px;" width="16" height="17" viewBox="0 0 16 17"><path d="M1 1 H7.5 L10 3.5 V15.5 H1 Z" stroke="#fff" stroke-width="1.1" fill="none"/><rect x="6.5" y="7" width="8" height="9.5" stroke="#fff" stroke-width="1.1" fill="#00adef"/><path d="M8.5 9.5 h1 M11.5 9.5 h1 M8.5 12 h1 M11.5 12 h1 M8.5 14.5 h1 M11.5 14.5 h1" stroke="#fff" stroke-width="1"/></svg>
<svg style="position:absolute;left:1114px;top:280px;" width="17" height="17" viewBox="0 0 17 17"><path d="M1 1 H7.5 L10 3.5 V15.5 H1 Z M3 7 H6 M3 9.5 H6 M3 12 H6" stroke="#fff" stroke-width="1.1" fill="none"/><rect x="7.5" y="7" width="8" height="9.5" stroke="#fff" stroke-width="1.1" fill="#00adef"/><path d="M9.5 9.5 h1 M12.5 9.5 h1 M9.5 12 h1 M12.5 12 h1 M9.5 14.5 h1 M12.5 14.5 h1" stroke="#fff" stroke-width="1"/></svg>
<div style="position:absolute;left:917.5px;top:306.5px;line-height:14px;font-size:11.6px;color:#2350ad;font-weight:400;white-space:nowrap;">Čerpáno:</div>
<div style="position:absolute;right:31px;top:306.5px;line-height:14px;font-size:11.6px;color:#000;font-weight:400;white-space:nowrap;letter-spacing:-0.35px">0,00 <span style="color:#2350ad">Kč</span></div>
<div style="position:absolute;left:917px;top:321.0px;width:233px;height:1px;background:#dedede"></div>
<div style="position:absolute;left:917.5px;top:328.5px;line-height:14px;font-size:11.6px;color:#2350ad;font-weight:700;white-space:nowrap;">Dočerpat:</div>
<div style="position:absolute;right:31px;top:328.5px;line-height:14px;font-size:11.6px;color:#000;font-weight:700;white-space:nowrap;letter-spacing:-0.35px">0,00 <span style="color:#2350ad">Kč</span></div>
<div style="position:absolute;left:917px;top:343.0px;width:233px;height:1px;background:#dedede"></div>
<div style="position:absolute;left:910px;top:386px;width:247px;height:25px;background:#00adef"></div>
<div style="position:absolute;left:914.5px;top:390.5px;line-height:16px;font-size:13px;color:#fff;font-weight:700;white-space:nowrap;">Zálohy k dodavateli</div>
<div style="position:absolute;left:1132px;top:388px;width:1px;height:21px;background:#1a8fc8;opacity:.7"></div>
<svg style="position:absolute;left:1138px;top:395px;" width="14" height="8" viewBox="0 0 14 8"><path d="M0.7 7.3 L7 1 L13.3 7.3" stroke="#fff" stroke-width="1.3" fill="none"/></svg>
<div style="position:absolute;left:910px;top:411px;width:247px;height:80px;background:#fafafa"></div>
<svg style="position:absolute;left:1112px;top:390px;" width="19" height="19" viewBox="0 0 19 19"><circle cx="6.5" cy="5" r="4" stroke="#fff" stroke-width="1.2" fill="none"/><path d="M0.8 15.5 A6 6 0 0 1 11 11" stroke="#fff" stroke-width="1.2" fill="none"/><rect x="10" y="9.5" width="8" height="9" stroke="#fff" stroke-width="1.1" fill="#00adef"/><path d="M12 12 h1 M15 12 h1 M12 14.5 h1 M15 14.5 h1 M12 17 h1 M15 17 h1" stroke="#fff" stroke-width="1"/></svg>
<div style="position:absolute;left:917.5px;top:418.0px;line-height:14px;font-size:11.6px;color:#2350ad;font-weight:400;white-space:nowrap;">Čerpáno:</div>
<div style="position:absolute;right:31px;top:418.0px;line-height:14px;font-size:11.6px;color:#000;font-weight:400;white-space:nowrap;letter-spacing:-0.35px">310 000,00 <span style="color:#2350ad">Kč</span></div>
<div style="position:absolute;left:917px;top:432.5px;width:233px;height:1px;background:#dedede"></div>
<div style="position:absolute;left:917.5px;top:440.0px;line-height:14px;font-size:11.6px;color:#2350ad;font-weight:700;white-space:nowrap;">Dočerpat:</div>
<div style="position:absolute;right:31px;top:440.0px;line-height:14px;font-size:11.6px;color:#000;font-weight:700;white-space:nowrap;letter-spacing:-0.35px">9 000,00 <span style="color:#2350ad">Kč</span></div>
<div style="position:absolute;left:917px;top:454.5px;width:233px;height:1px;background:#dedede"></div>
<svg style="position:absolute;left:919px;top:461px;" width="22" height="23" viewBox="0 0 22 23"><rect x="1.8" y="1.8" width="15.5" height="17.5" stroke="#000" stroke-width="1.6" fill="#fff"/><path d="M4.5 6 H10.5 M12 6 H13.8 M4.5 8.8 H10.5 M12 8.8 H13.8 M4.5 11.6 H6.3" stroke="#000" stroke-width="1.2"/><ellipse cx="15.2" cy="18.8" rx="5.3" ry="2.3" fill="#ffd23a" stroke="#f5a623" stroke-width="0.7"/><ellipse cx="15.2" cy="15.9" rx="5.3" ry="2.3" fill="#ffe04a" stroke="#f5a623" stroke-width="0.7"/></svg>
<div style="position:absolute;left:910px;top:497px;width:247px;height:25px;background:#00adef"></div>
<div style="position:absolute;left:914.5px;top:501.5px;line-height:16px;font-size:13px;color:#fff;font-weight:700;white-space:nowrap;">Ostatní údaje</div>
<div style="position:absolute;left:1132px;top:499px;width:1px;height:21px;background:#1a8fc8;opacity:.7"></div>
<svg style="position:absolute;left:1138px;top:506px;" width="14" height="8" viewBox="0 0 14 8"><path d="M0.7 7.3 L7 1 L13.3 7.3" stroke="#fff" stroke-width="1.3" fill="none"/></svg>
<div style="position:absolute;left:910px;top:522px;width:247px;height:50px;background:#fafafa"></div>
<div style="position:absolute;left:917.5px;top:529.0px;line-height:14px;font-size:11.6px;color:#2350ad;font-weight:400;white-space:nowrap;">Vytvořil:</div>
<div style="position:absolute;right:31px;top:529.0px;line-height:14px;font-size:11.6px;color:#000;font-weight:400;white-space:nowrap;letter-spacing:-0.35px">K2 <span style="color:#2350ad">23.02.2024 12:29:03</span></div>
<div style="position:absolute;left:917px;top:543.5px;width:233px;height:1px;background:#dedede"></div>
<div style="position:absolute;left:917.5px;top:551.0px;line-height:14px;font-size:11.6px;color:#2350ad;font-weight:400;white-space:nowrap;">Změnil:</div>
<div style="position:absolute;right:31px;top:551.0px;line-height:14px;font-size:11.6px;color:#000;font-weight:400;white-space:nowrap;letter-spacing:-0.35px">K2 <span style="color:#2350ad">23.02.2024 12:30:13</span></div>
<div style="position:absolute;left:917px;top:565.5px;width:233px;height:1px;background:#dedede"></div>
<div style="position:absolute;left:910px;top:579px;width:247px;height:25px;background:#00adef"></div>
<div style="position:absolute;left:914.5px;top:583.5px;line-height:16px;font-size:13px;color:#fff;font-weight:700;white-space:nowrap;">Doklady přenesené mezi firmami</div>
<div style="position:absolute;left:1132px;top:581px;width:1px;height:21px;background:#1a8fc8;opacity:.7"></div>
<svg style="position:absolute;left:1138px;top:588px;" width="14" height="8" viewBox="0 0 14 8"><path d="M0.7 7.3 L7 1 L13.3 7.3" stroke="#fff" stroke-width="1.3" fill="none"/></svg>
<div style="position:absolute;left:910px;top:604px;width:247px;height:44px;background:#fafafa"></div>
<div style="position:absolute;left:917px;top:610px;width:233px;height:38px;border:1px solid #d6d6d6;border-bottom:none;box-sizing:border-box;background:#fafafa"></div>
<div style="position:absolute;left:918px;top:611px;width:228px;height:21px;background:#f0f0f0;border-right:1px solid #d6d6d6;border-bottom:1px solid #d6d6d6;box-sizing:border-box"></div>
<div style="position:absolute;left:993px;top:611px;width:1px;height:21px;background:#d6d6d6"></div>
<div style="position:absolute;left:1069.5px;top:611px;width:1px;height:21px;background:#d6d6d6"></div>
<div style="position:absolute;left:923.5px;top:615.0px;line-height:14px;font-size:11.5px;color:#2350ad;font-weight:400;white-space:nowrap;">Firma</div>
<div style="position:absolute;left:1000px;top:615.0px;line-height:14px;font-size:11.5px;color:#2350ad;font-weight:400;white-space:nowrap;">Typ</div>
<div style="position:absolute;left:1076px;top:615.0px;line-height:14px;font-size:11.5px;color:#2350ad;font-weight:400;white-space:nowrap;">Doklad</div>
<div style="position:absolute;left:918px;top:632px;width:231px;height:16px;background:#e0e0e0"></div>
<div style="position:absolute;left:918px;top:632px;width:231px;height:16px;overflow:hidden"><div style="position:absolute;left:0;width:231px;text-align:center;top:4px;line-height:14px;font-size:11.6px;color:#000">Žádné údaje</div></div>
<div style="position:absolute;left:907px;top:647px;width:271px;height:4px;background:#0053a5"></div>
<div style="position:absolute;left:910px;top:651px;width:264px;height:25px;background:#00adef"></div>
<div style="position:absolute;left:914.5px;top:655.5px;line-height:16px;font-size:13px;color:#fff;font-weight:700;white-space:nowrap;">Nastavení</div>
<div style="position:absolute;left:1149px;top:653px;width:1px;height:21px;background:#1a8fc8;opacity:.7"></div>
<svg style="position:absolute;left:1155px;top:660px;" width="14" height="8" viewBox="0 0 14 8"><path d="M0.7 7.3 L7 1 L13.3 7.3" stroke="#fff" stroke-width="1.3" fill="none"/></svg>
<div style="position:absolute;left:910px;top:676px;width:264px;height:50px;background:#fafafa"></div>
<div style="position:absolute;left:924.5px;top:683.0px;line-height:14px;font-size:11.5px;color:#2350ad;font-weight:400;white-space:nowrap;">Období</div>
<div style="position:absolute;left:1053.5px;top:683.0px;line-height:14px;font-size:11.5px;color:#2350ad;font-weight:400;white-space:nowrap;">Sklad</div>
<div style="position:absolute;left:917px;top:697px;width:123px;height:23px;background:#fffde3;border:1px solid #1aa3ea;box-sizing:border-box"></div>
<div style="position:absolute;left:920.5px;top:702.0px;line-height:15px;font-size:12.5px;color:#000;font-weight:400;white-space:nowrap;">2024</div>
<svg style="position:absolute;left:1023px;top:703px;" width="13" height="11" viewBox="0 0 13 11"><rect x="0.5" y="0.5" width="2.6" height="2.6" stroke="#2a5aa8" stroke-width="1" fill="none"/><rect x="5" y="0.5" width="2.6" height="2.6" stroke="#2a5aa8" stroke-width="1" fill="none"/><rect x="9.5" y="0.5" width="2.6" height="2.6" stroke="#2a5aa8" stroke-width="1" fill="none"/><path d="M0.5 5 L6.3 10.3 L12.1 5" stroke="#2a5aa8" stroke-width="1.1" fill="none"/></svg>
<div style="position:absolute;left:1046px;top:697px;width:121px;height:23px;background:#fffde3;border:1px solid #1aa3ea;box-sizing:border-box"></div>
<div style="position:absolute;left:1049.5px;top:702.0px;line-height:15px;font-size:12.5px;color:#000;font-weight:400;white-space:nowrap;">MAT</div>
<svg style="position:absolute;left:1149px;top:703px;" width="13" height="11" viewBox="0 0 13 11"><rect x="0.5" y="0.5" width="2.6" height="2.6" stroke="#2a5aa8" stroke-width="1" fill="none"/><rect x="5" y="0.5" width="2.6" height="2.6" stroke="#2a5aa8" stroke-width="1" fill="none"/><rect x="9.5" y="0.5" width="2.6" height="2.6" stroke="#2a5aa8" stroke-width="1" fill="none"/><path d="M0.5 5 L6.3 10.3 L12.1 5" stroke="#2a5aa8" stroke-width="1.1" fill="none"/></svg>
</body></html>
